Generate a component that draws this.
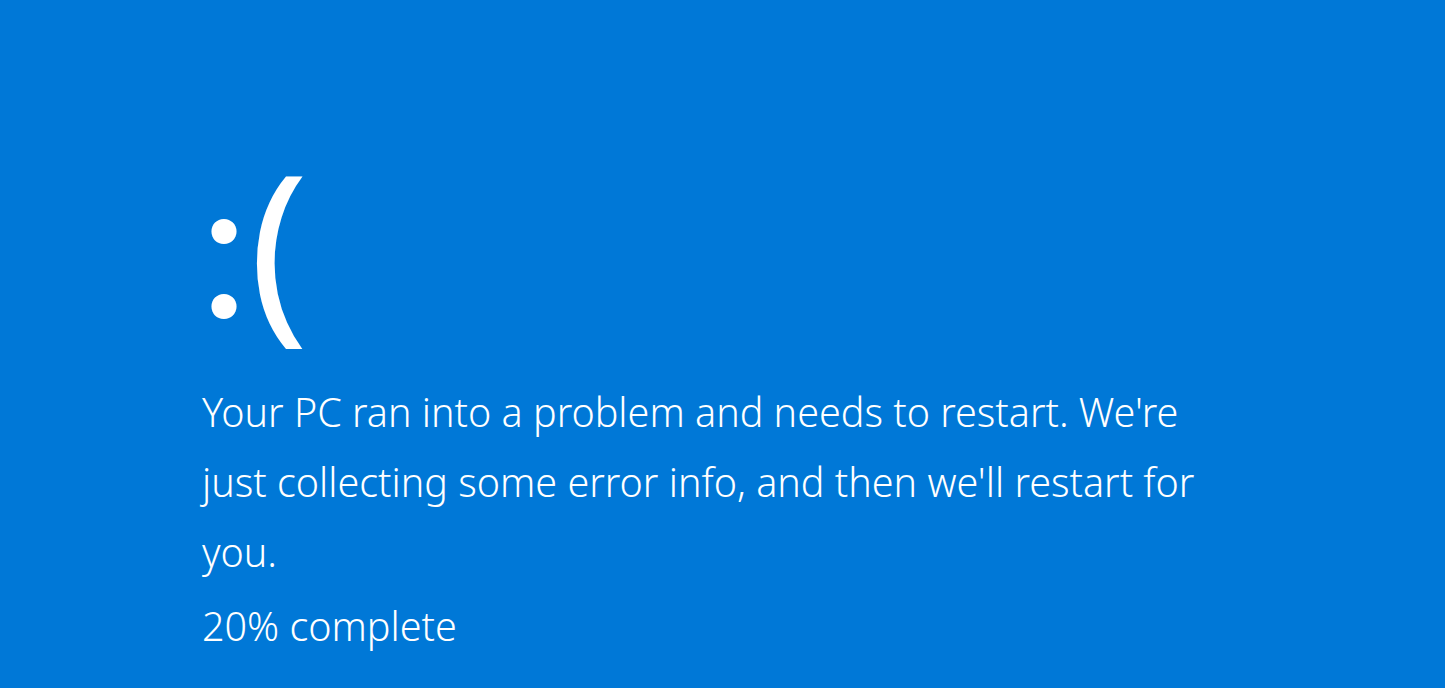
import React from "react";

const BlueScreen = () => {
  return (
    <div className="min-h-screen w-full bg-[#0078d7] text-white overflow-hidden font-['Noto_Sans',sans-serif]">
      <div className="pl-[202px] pt-[132px]">
        {/* Sad face */}
        <div className="text-[198px] leading-[218px] h-[245px] whitespace-nowrap ml-[-3px]">
          <span className="font-['Lato',sans-serif] text-[200px] leading-none">:</span>
          <span>(</span>
        </div>

        <p className="w-[1020px] text-[39.5px] font-light leading-[70px]">
          Your PC ran into a problem and needs to restart. We're just collecting some error info, and then we'll restart for you.
        </p>

        <p className="text-[39.5px] font-light leading-[70px] mt-[4px]">20% complete</p>
      </div>
    </div>
  );
};

export default function App() {
  return <BlueScreen />;
}
